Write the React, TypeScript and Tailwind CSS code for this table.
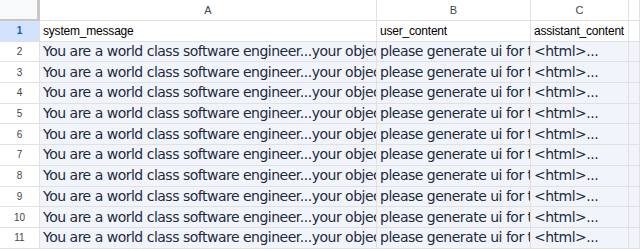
// Spreadsheet view: frozen header row + row-number gutter, 11 rows of prompt data.
const COLS = ['A', 'B', 'C'];
const HEADER = ['system_message', 'user_content', 'assistant_content'];
const ROW = ['You are a world class software engineer...your objective is to generate ui', 'please generate ui for the following screenshot', '<html>...'];
const ROWS = Array.from({ length: 10 }, (_, i) => i + 2);

const grid = 'grid grid-cols-[40px_337px_154px_98px_1fr]';
const cell = 'overflow-hidden whitespace-nowrap border-b border-r border-[#e1e1e1]';

export default function App() {
  return (
    <div className="h-[251px] w-[640px] overflow-hidden bg-white font-['Liberation_Sans',Arial,sans-serif]">
      {/* column letters */}
      <div className={grid}>
        <div className="h-[21px] border-b-2 border-r-[3px] border-[#c7c7c7] bg-[#f8f9fa]" />
        {COLS.map((c) => (
          <div key={c} className={`${cell} flex h-[21px] items-center justify-center bg-white text-[11px] text-[#444746]`}>
            {c}
          </div>
        ))}
        <div className={`${cell} h-[21px] bg-white`} />
      </div>

      {/* row 1: headers */}
      <div className={grid}>
        <div className={`${cell} flex h-[20.7px] items-center justify-center bg-[#d3e3fd] text-[10px] font-bold text-[#0b57d0]`}>1</div>
        {HEADER.map((h) => (
          <div key={h} className={`${cell} flex h-[20.7px] items-center px-[3px] text-[12px] tracking-[-0.2px] text-[#000]`}>
            {h}
          </div>
        ))}
        <div className={`${cell} h-[20.7px]`} />
      </div>

      {ROWS.map((n) => (
        <div key={n} className={grid}>
          <div className={`${cell} flex h-[20.7px] items-center justify-center bg-white text-[10px] text-[#444746]`}>{n}</div>
          {ROW.map((t, i) => (
            <div
              key={i}
              className={`${cell} flex h-[20.7px] items-center bg-[#f1f5fb] px-[3px] font-['DejaVu_Sans',sans-serif] text-[14px] tracking-[-0.5px] text-[#1e2a3b]`}
            >
              {t}
            </div>
          ))}
          <div className={`${cell} h-[20.7px] bg-[#f1f5fb]`} />
        </div>
      ))}
    </div>
  );
}
